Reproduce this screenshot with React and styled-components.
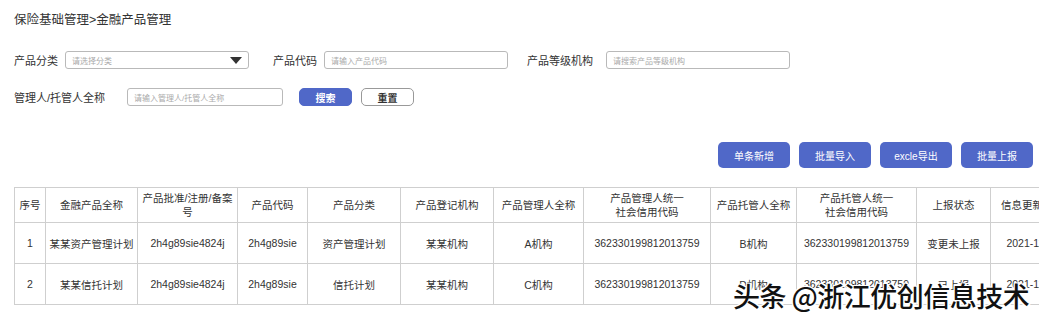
import React from 'react';
import styled, { createGlobalStyle } from 'styled-components';

const GlobalStyle = createGlobalStyle`
  html, body {
    margin: 0;
    padding: 0;
    background: #fff;
    overflow: hidden;
  }
  body {
    font-family: "Liberation Sans", "Noto Sans CJK SC", sans-serif;
    color: #333;
  }
`;

const Page = styled.div`
  position: relative;
  width: 1039px;
  height: 319px;
  overflow: hidden;
  padding: 12px 0 0 14px;
  box-sizing: border-box;
`;

const Title = styled.div`
  font-size: 12.5px;
  line-height: 16px;
  color: #333;
`;

const FilterRow = styled.div`
  display: flex;
  align-items: center;
  height: 18px;
  margin-top: ${p => p.$top}px;
`;

const Label = styled.span`
  font-size: 11px;
  color: #333;
  white-space: nowrap;
  width: ${p => p.$w}px;
  margin-left: ${p => p.$ml || 0}px;
`;

const Input = styled.div`
  width: ${p => p.$w}px;
  height: 18px;
  box-sizing: border-box;
  border: 1px solid #b9b9b9;
  border-radius: 3px;
  display: flex;
  align-items: center;
  justify-content: space-between;
  padding: 0 6px;
  font-size: 8px;
  color: #aaa;
`;

const Caret = styled.span`
  width: 0;
  height: 0;
  border-left: 6.5px solid transparent;
  border-right: 6.5px solid transparent;
  border-top: 7px solid #333;
`;

const SmallButton = styled.button`
  width: 53px;
  height: 18px;
  box-sizing: border-box;
  border-radius: 5px;
  font-family: inherit;
  font-size: 10px;
  font-weight: 700;
  padding: 0;
  margin-left: ${p => p.$ml}px;
  border: 1px solid ${p => (p.$primary ? '#5068c8' : '#999')};
  background: ${p => (p.$primary ? '#5068c8' : '#fff')};
  color: ${p => (p.$primary ? '#fff' : '#333')};
`;

const ActionBar = styled.div`
  display: flex;
  justify-content: flex-end;
  gap: 9px;
  padding-right: 6px;
  margin-top: 36px;
`;

const ActionButton = styled.button`
  width: 72px;
  height: 26px;
  border: none;
  border-radius: 5px;
  background: #5068c8;
  color: #fff;
  font-family: inherit;
  font-size: 10px;
  padding: 0;
`;

const Table = styled.table`
  width: ${p => p.$w}px;
  margin-top: 19px;
  border-collapse: collapse;
  table-layout: fixed;
  font-size: 10.5px;
  color: #333;
  border: 1px solid #cfcfcf;
`;

const Th = styled.th`
  font-weight: 400;
  height: 34px;
  border: 1px solid #cfcfcf;
  line-height: 14px;
  padding: 0 2px;
  text-align: center;
  white-space: nowrap;
`;

const Td = styled.td`
  height: 40px;
  border: 1px solid #cfcfcf;
  text-align: center;
  padding: 0 2px;
  white-space: nowrap;
  overflow: hidden;
`;

const Watermark = styled.div`
  position: absolute;
  left: 733px;
  top: 278px;
  font-family: "Noto Sans CJK SC", sans-serif;
  font-size: 27px;
  font-weight: 500;
  line-height: 36px;
  color: #111;
  white-space: nowrap;
  letter-spacing: -0.5px;
  text-shadow: 1px 1px 0 #fff, -1px -1px 0 #fff, 1px -1px 0 #fff, -1px 1px 0 #fff, 0 2px 0 #fff, 2px 0 0 #fff;
`;

const columns = [
  { w: 31, title: '序号' },
  { w: 92, title: '金融产品全称' },
  { w: 100, title: <>产品批准/注册/备案<br />号</> },
  { w: 70, title: '产品代码' },
  { w: 93, title: '产品分类' },
  { w: 93, title: '产品登记机构' },
  { w: 90, title: '产品管理人全称' },
  { w: 127, title: <>产品管理人统一<br />社会信用代码</> },
  { w: 86, title: '产品托管人全称' },
  { w: 120, title: <>产品托管人统一<br />社会信用代码</> },
  { w: 74, title: '上报状态' },
  { w: 84, title: '信息更新时间' },
];

const tableWidth = columns.reduce((s, c) => s + c.w, 0);

const rows = [
  ['1', '某某资产管理计划', '2h4g89sie4824j', '2h4g89sie', '资产管理计划', '某某机构', 'A机构', '362330199812013759', 'B机构', '362330199812013759', '变更未上报', '2021-11-11'],
  ['2', '某某信托计划', '2h4g89sie4824j', '2h4g89sie', '信托计划', '某某机构', 'C机构', '362330199812013759', 'D机构', '362330199812013759', '已上报', '2021-11-11'],
];

export default function App() {
  return (
    <Page>
      <GlobalStyle />
      <Title>保险基础管理&gt;金融产品管理</Title>

      <FilterRow $top={23}>
        <Label $w={51}>产品分类</Label>
        <Input $w={184}>
          <span>请选择分类</span>
          <Caret />
        </Input>
        <Label $w={51} $ml={24}>产品代码</Label>
        <Input $w={184}>请输入产品代码</Input>
        <Label $w={79} $ml={19}>产品等级机构</Label>
        <Input $w={184}>请搜索产品等级机构</Input>
      </FilterRow>

      <FilterRow $top={19}>
        <Label $w={113}>管理人/托管人全称</Label>
        <Input $w={156}>请输入管理人/托管人全称</Input>
        <SmallButton $primary $ml={16}>搜索</SmallButton>
        <SmallButton $ml={9}>重置</SmallButton>
      </FilterRow>

      <ActionBar>
        <ActionButton>单条新增</ActionButton>
        <ActionButton>批量导入</ActionButton>
        <ActionButton>excle导出</ActionButton>
        <ActionButton>批量上报</ActionButton>
      </ActionBar>

      <Table $w={tableWidth}>
        <colgroup>
          {columns.map((c, i) => <col key={i} style={{ width: c.w }} />)}
        </colgroup>
        <thead>
          <tr>
            {columns.map((c, i) => <Th key={i}>{c.title}</Th>)}
          </tr>
        </thead>
        <tbody>
          {rows.map((r, i) => (
            <tr key={i}>
              {r.map((v, j) => <Td key={j}>{v}</Td>)}
            </tr>
          ))}
        </tbody>
      </Table>

      <Watermark>头条 @浙江优创信息技术</Watermark>
    </Page>
  );
}
